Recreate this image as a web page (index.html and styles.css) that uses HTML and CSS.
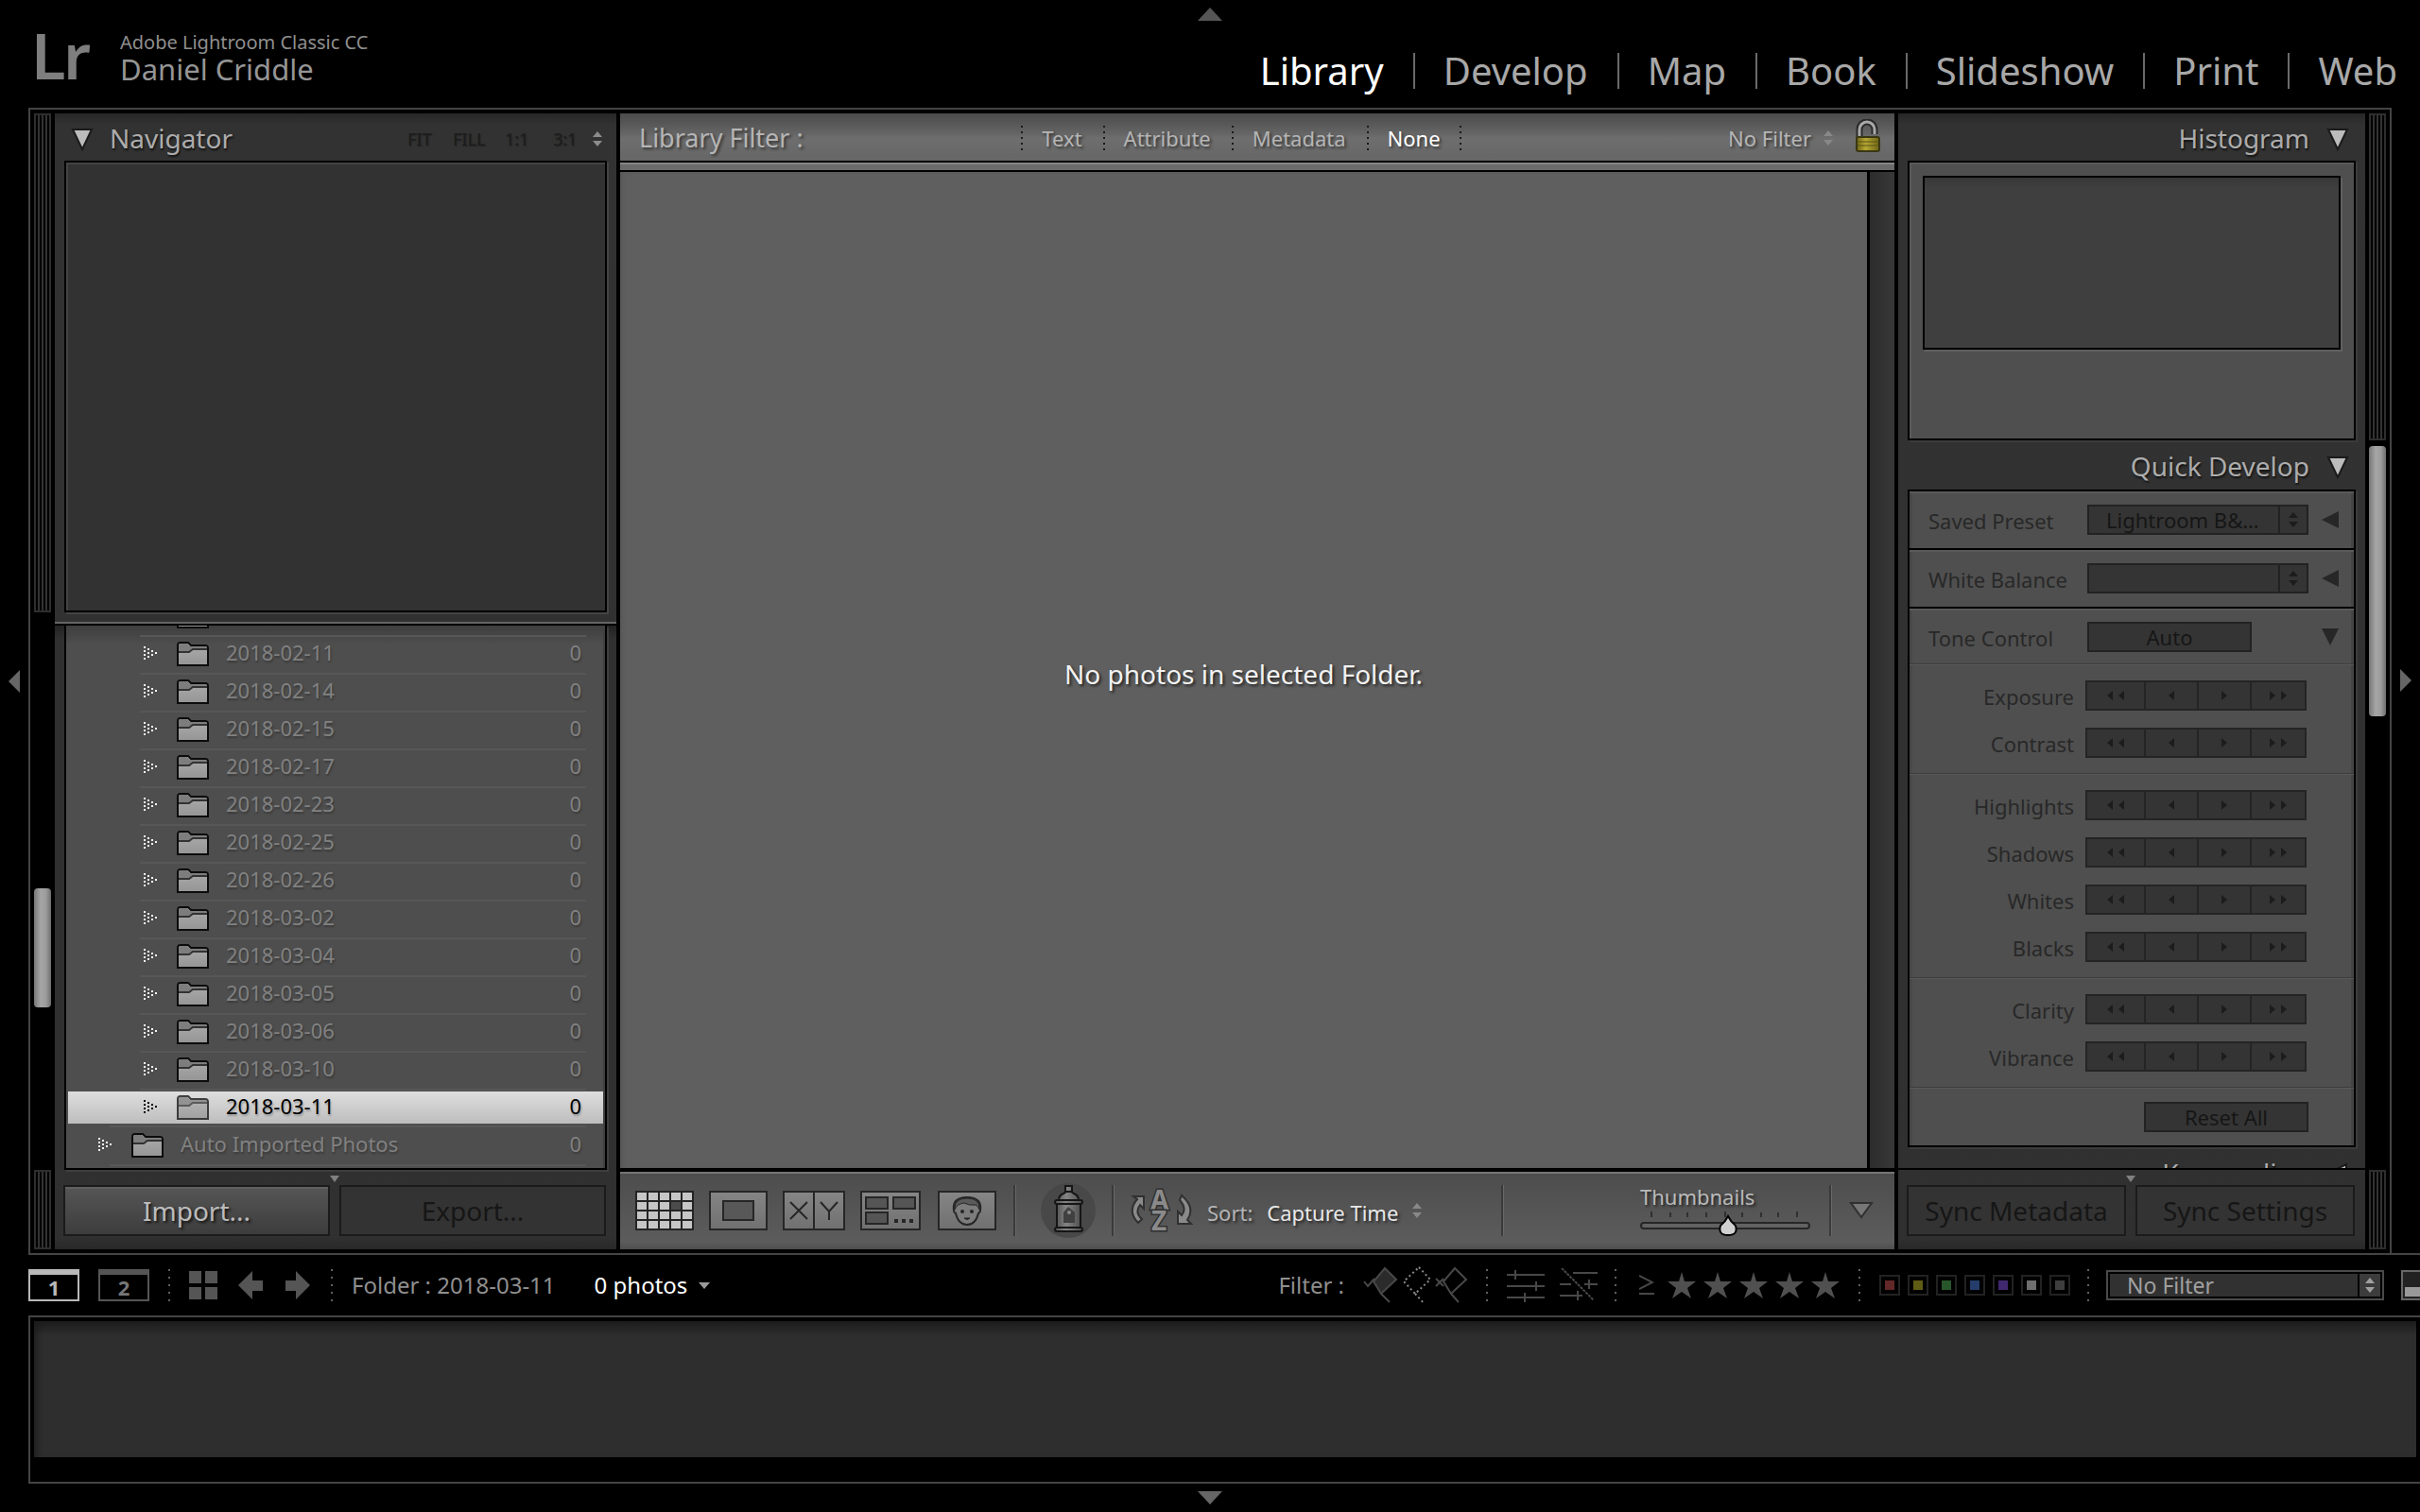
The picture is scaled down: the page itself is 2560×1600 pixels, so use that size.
FILE: index.html
```html
<!DOCTYPE html>
<html lang="en">
<head>
<meta charset="utf-8">
<title>Lightroom Library</title>
<link rel="stylesheet" href="styles.css">
</head>
<body>
<svg class="defs" width="0" height="0" aria-hidden="true">
  <defs>
    <linearGradient id="folderFill" x1="0" y1="0" x2="0" y2="1"><stop offset="0" stop-color="#adadad"/><stop offset="1" stop-color="#959595"/></linearGradient>
    <linearGradient id="iconFill" x1="0" y1="0" x2="0" y2="1"><stop offset="0" stop-color="#868686"/><stop offset="1" stop-color="#707070"/></linearGradient>
    <linearGradient id="brass" x1="0" y1="0" x2="1" y2="0"><stop offset="0" stop-color="#6d6414"/><stop offset=".4" stop-color="#b5a733"/><stop offset="1" stop-color="#6d6414"/></linearGradient>
    <linearGradient id="canFill" x1="0" y1="0" x2="1" y2="0"><stop offset="0" stop-color="#555"/><stop offset=".4" stop-color="#858585"/><stop offset="1" stop-color="#505050"/></linearGradient>
    <symbol id="folder" viewBox="0 0 34 27"><path d="M1 25V4q0-3 3-3h8l3 3h15q3 0 3 3v18z" fill="url(#folderFill)" stroke="#0c0c0c" stroke-width="2"/><path d="M2 10V4q0-2 2-2h7l3 3h16q2 0 2 3H17l-3 3H2z" fill="#7d7d7d"/><path d="M2 11h11l4-3h15" fill="none" stroke="#333" stroke-width="2"/></symbol>
    <symbol id="dots" viewBox="0 0 16 16"><path d="M1 0h2v2H1zM1 4h2v2H1zM1 8h2v2H1zM1 12h2v2H1zM5 2h2v2H5zM5 6h2v2H5zM5 10h2v2H5zM9 4h2v2H9zM9 8h2v2H9zM13 6h2v2h-2z" fill="currentColor"/></symbol>
    <symbol id="updown" viewBox="0 0 12 18"><path d="M6 1l5 6H1zM6 17l5-6H1z" fill="currentColor"/></symbol>
    <symbol id="open" viewBox="0 0 24 26"><path d="M2 3h20L12 24z" fill="#bcbcbc" stroke="#1a1a1a" stroke-width="2"/></symbol>
    <symbol id="star" viewBox="0 0 30 28"><path d="M15 0l3 10h12l-9 7 4 11-10-7-10 7 4-11-9-7h12z" fill="#505050"/></symbol>
    <symbol id="prev2" viewBox="0 0 20 12"><path d="M7 1v10L1 6zM19 1v10l-6-5z" fill="#1c1c1c"/></symbol>
    <symbol id="prev1" viewBox="0 0 20 12"><path d="M13 1v10L7 6z" fill="#1c1c1c"/></symbol>
    <symbol id="next1" viewBox="0 0 20 12"><path d="M7 1v10l6-5z" fill="#1c1c1c"/></symbol>
    <symbol id="next2" viewBox="0 0 20 12"><path d="M1 1v10l6-5zM13 1v10l6-5z" fill="#1c1c1c"/></symbol>
  </defs>
</svg>

<header class="top">
  <div class="top-arrow"><svg width="26" height="14" viewBox="0 0 26 14"><path d="M13 0l13 14H0z" fill="#555"/></svg></div>
  <div class="identity">
    <svg class="logo" width="60" height="54" viewBox="0 0 60 54" role="img" aria-label="Lr"><text y="52" font-size="67"><tspan x="-5">L</tspan><tspan x="29">r</tspan></text></svg>
    <div class="names"><div class="product">Adobe Lightroom Classic CC</div><div class="owner">Daniel Criddle</div></div>
  </div>
  <nav class="modules">
    <a href="#library" class="current">Library</a><a href="#develop">Develop</a><a href="#map">Map</a><a href="#book">Book</a><a href="#slideshow">Slideshow</a><a href="#print">Print</a><a href="#web">Web</a>
  </nav>
</header>

<main class="work">
  <button class="edge" aria-label="Hide left panel"><svg width="12" height="24" viewBox="0 0 12 24"><path d="M12 0v24L0 12z" fill="#666"/></svg></button>
  <div class="work-body">
    <div class="frame">
      <div class="rail">
        <div class="grip grip-nav"></div>
        <div class="track left-track"><div class="thumb"></div></div>
        <div class="grip grip-foot"></div>
      </div>

      <section class="panel">
        <div class="navigator">
          <div class="panel-head">
            <svg width="24" height="26"><use href="#open"/></svg>
            <h2>Navigator</h2>
            <div class="zooms"><span class="z-fit">FIT</span><span class="z-fill">FILL</span><span class="z-one">1:1</span><span class="z-three">3:1</span></div>
            <svg class="ud" width="12" height="18"><use href="#updown"/></svg>
          </div>
          <div class="preview"></div>
        </div>
        <div class="folders-wrap">
          <ul class="folders">
            <li><a class="row" href="#f"><svg class="dots" width="16" height="16"><use href="#dots"/></svg><svg width="34" height="27"><use href="#folder"/></svg></a></li>
            <li><a class="row" href="#f"><svg class="dots" width="16" height="16"><use href="#dots"/></svg><svg width="34" height="27"><use href="#folder"/></svg><span class="name">2018-02-11</span><span>0</span></a></li>
            <li><a class="row" href="#f"><svg class="dots" width="16" height="16"><use href="#dots"/></svg><svg width="34" height="27"><use href="#folder"/></svg><span class="name">2018-02-14</span><span>0</span></a></li>
            <li><a class="row" href="#f"><svg class="dots" width="16" height="16"><use href="#dots"/></svg><svg width="34" height="27"><use href="#folder"/></svg><span class="name">2018-02-15</span><span>0</span></a></li>
            <li><a class="row" href="#f"><svg class="dots" width="16" height="16"><use href="#dots"/></svg><svg width="34" height="27"><use href="#folder"/></svg><span class="name">2018-02-17</span><span>0</span></a></li>
            <li><a class="row" href="#f"><svg class="dots" width="16" height="16"><use href="#dots"/></svg><svg width="34" height="27"><use href="#folder"/></svg><span class="name">2018-02-23</span><span>0</span></a></li>
            <li><a class="row" href="#f"><svg class="dots" width="16" height="16"><use href="#dots"/></svg><svg width="34" height="27"><use href="#folder"/></svg><span class="name">2018-02-25</span><span>0</span></a></li>
            <li><a class="row" href="#f"><svg class="dots" width="16" height="16"><use href="#dots"/></svg><svg width="34" height="27"><use href="#folder"/></svg><span class="name">2018-02-26</span><span>0</span></a></li>
            <li><a class="row" href="#f"><svg class="dots" width="16" height="16"><use href="#dots"/></svg><svg width="34" height="27"><use href="#folder"/></svg><span class="name">2018-03-02</span><span>0</span></a></li>
            <li><a class="row" href="#f"><svg class="dots" width="16" height="16"><use href="#dots"/></svg><svg width="34" height="27"><use href="#folder"/></svg><span class="name">2018-03-04</span><span>0</span></a></li>
            <li><a class="row" href="#f"><svg class="dots" width="16" height="16"><use href="#dots"/></svg><svg width="34" height="27"><use href="#folder"/></svg><span class="name">2018-03-05</span><span>0</span></a></li>
            <li><a class="row" href="#f"><svg class="dots" width="16" height="16"><use href="#dots"/></svg><svg width="34" height="27"><use href="#folder"/></svg><span class="name">2018-03-06</span><span>0</span></a></li>
            <li><a class="row" href="#f"><svg class="dots" width="16" height="16"><use href="#dots"/></svg><svg width="34" height="27"><use href="#folder"/></svg><span class="name">2018-03-10</span><span>0</span></a></li>
            <li class="wide-rule"><a class="row selected" href="#f"><svg class="dots" width="16" height="16"><use href="#dots"/></svg><svg class="faded" width="34" height="27"><use href="#folder"/></svg><span class="name">2018-03-11</span><span>0</span></a></li>
            <li class="wide-rule"><a class="row parent" href="#f"><svg class="dots" width="16" height="16"><use href="#dots"/></svg><svg width="34" height="27"><use href="#folder"/></svg><span class="name">Auto Imported Photos</span><span>0</span></a></li>
          </ul>
        </div>
        <div class="panel-foot">
          <svg class="nub" width="10" height="7" viewBox="0 0 10 7"><path d="M0 0h10L5 7z" fill="#808080"/></svg>
          <div class="pair"><button class="big on">Import...</button><button class="big" disabled>Export...</button></div>
        </div>
      </section>

      <section class="center">
        <div class="filterbar">
          <span class="fb-title">Library Filter :</span>
          <div class="fb-tabs"><button>Text</button><button>Attribute</button><button>Metadata</button><button class="current">None</button></div>
          <div class="fb-right"><span>No Filter</span><svg class="dim" width="12" height="18"><use href="#updown"/></svg>
            <svg class="lock" width="28" height="36" viewBox="0 0 28 36"><path d="M5 20V11a8 8 0 0 1 16 0v5" fill="none" stroke="#2b2b2b" stroke-width="7"/><path d="M5 20V11a8 8 0 0 1 16 0v5" fill="none" stroke="#a9a9a9" stroke-width="3"/><rect x="2" y="19" width="24" height="15" rx="2" fill="url(#brass)" stroke="#3a3714" stroke-width="2"/><path d="M3 24h22M3 28h22" stroke="#5d5512"/></svg></div>
        </div>
        <div class="band"></div>
        <div class="stage"><div class="canvas"><p>No photos in selected Folder.</p></div><div class="gutter"></div></div>
        <div class="toolbar">
          <div class="views">
            <button aria-label="Grid view"><svg width="62" height="42" viewBox="0 0 62 42"><rect width="62" height="42" fill="#242424"/><path d="M2 2h10v8H2zM14 2h10v8H14zM26 2h10v8H26zM38 2h10v8H38zM50 2h10v8H50zM2 12h10v8H2zM14 12h10v8H14zM26 12h10v8H26zM50 12h10v8H50zM2 22h10v8H2zM14 22h10v8H14zM26 22h10v8H26zM38 22h10v8H38zM50 22h10v8H50zM2 32h10v8H2zM14 32h10v8H14zM26 32h10v8H26zM38 32h10v8H38zM50 32h10v8H50z" fill="#c6c6c6"/><path d="M38 12h10v8H38z" fill="#4c4c4c"/></svg></button>
            <button aria-label="Loupe view"><svg width="62" height="42" viewBox="0 0 62 42"><rect x="1" y="1" width="60" height="40" fill="url(#iconFill)" stroke="#262626" stroke-width="2"/><rect x="15" y="11" width="32" height="20" fill="#585858" stroke="#262626" stroke-width="2"/></svg></button>
            <button aria-label="Compare view"><svg width="66" height="42" viewBox="0 0 66 42"><rect x="1" y="1" width="64" height="40" fill="url(#iconFill)" stroke="#262626" stroke-width="2"/><path d="M33 1v40M8 12l18 18M26 12L8 30M40 12l9 10 9-10M49 22v9" fill="none" stroke="#262626" stroke-width="2"/></svg></button>
            <button aria-label="Survey view"><svg width="64" height="42" viewBox="0 0 64 42"><rect x="1" y="1" width="62" height="40" fill="url(#iconFill)" stroke="#262626" stroke-width="2"/><path d="M6 7h23v12H6zM35 7h23v12H35zM6 23h23v12H6z" fill="#555" stroke="#262626" stroke-width="2"/><path d="M36 30h4v4h-4zM44 30h4v4h-4zM52 30h4v4h-4z" fill="#262626"/></svg></button>
            <button aria-label="People view"><svg width="62" height="42" viewBox="0 0 62 42"><rect x="1" y="1" width="60" height="40" fill="url(#iconFill)" stroke="#262626" stroke-width="2"/><path d="M17 21q-2-14 14-14t14 14q0 2-2 3-3 12-12 12T19 24q-2-1-2-3z" fill="#7c7c7c" stroke="#262626" stroke-width="2"/><path d="M18 20q-1-12 13-12t13 12q-1-4-4-5-7 1-12-2-8 1-10 7z" fill="#5a5a5a" stroke="#262626"/><circle cx="26" cy="22" r="2" fill="#262626"/><circle cx="36" cy="22" r="2" fill="#262626"/><path d="M28 29h6q-3 3-6 0z" fill="#262626" stroke="#262626"/></svg></button>
          </div>
          <i class="rule"></i>
          <button class="spray" aria-label="Painter"><svg width="58" height="58" viewBox="0 0 58 58"><circle cx="29" cy="29" r="29" fill="#484848"/><g fill="url(#canFill)" stroke="#161616" stroke-width="2"><path d="M26 3h7v6h-7zM19 18q0-5 5-7l3-2h5l3 2q5 2 5 7zM17 22h25v27H17z"/><rect x="15" y="18" width="29" height="4" rx="2"/><rect x="15" y="47" width="29" height="4" rx="2"/></g><path d="M24 42V31l5-6 7 6v11z" fill="#404040"/><circle cx="30" cy="31" r="2" fill="#888"/></svg></button>
          <i class="rule"></i>
          <button class="az" aria-label="Sort direction"><svg width="66" height="50" viewBox="0 0 66 50"><g fill="#8a8a8a" stroke="#303030" stroke-width="2"><path d="M8 38q-12-12-1-25l-4-3h11v13l-4-4q-6 8 2 15zM54 9q15 13 6 26l4 4H50V26l4 4q6-7-2-16z"/></g><text x="21" y="24" class="az-t">A</text><text x="22" y="46" class="az-t">Z</text></svg></button>
          <span class="sort">Sort:</span><span class="sort-by">Capture Time</span><svg class="sort-ud" width="12" height="18"><use href="#updown"/></svg>
          <i class="rule sort-end"></i>
          <div class="thumbs">
            <label for="size">Thumbnails</label>
            <svg width="180" height="6" viewBox="0 0 180 6"><path d="M12 0v6M32 1v5M50 1v5M70 1v5M90 0v6M108 1v5M128 1v5M146 1v5M166 0v6" stroke="#303030" stroke-width="2"/></svg>
            <input id="size" type="range" min="0" max="100" value="52">
          </div>
          <i class="rule"></i>
          <button class="more" aria-label="Toolbar options"><svg width="26" height="18" viewBox="0 0 26 18"><path d="M2 1h22L13 16z" fill="#777" stroke="#303030" stroke-width="2"/></svg></button>
        </div>
      </section>

      <section class="panel">
        <div class="scroll">
          <div class="panel-head end"><h2>Histogram</h2><svg width="24" height="26"><use href="#open"/></svg></div>
          <div class="box histo"><div class="graph"></div></div>
          <div class="panel-head end tall"><h2>Quick Develop</h2><svg width="24" height="26"><use href="#open"/></svg></div>
          <div class="box quick">
            <div class="q-row"><label for="preset">Saved Preset</label><div class="drop"><select id="preset" disabled><option>Lightroom B&amp;…</option></select><svg width="12" height="18"><use href="#updown"/></svg></div><svg class="tri" width="18" height="18" viewBox="0 0 18 18"><path d="M18 0v18L0 9z" fill="#272727"/></svg></div>
            <div class="q-row"><label for="wb">White Balance</label><div class="drop"><select id="wb" disabled><option> </option></select><svg width="12" height="18"><use href="#updown"/></svg></div><svg class="tri" width="18" height="18" viewBox="0 0 18 18"><path d="M18 0v18L0 9z" fill="#272727"/></svg></div>
            <div class="q-row tone"><span>Tone Control</span><button class="small" disabled>Auto</button><svg class="tri" width="18" height="18" viewBox="0 0 18 18"><path d="M0 0h18L9 18z" fill="#272727"/></svg></div>
            <div class="q-group">
              <div class="step"><span>Exposure</span><button disabled aria-label="Much less"><svg width="20" height="12"><use href="#prev2"/></svg></button><button disabled aria-label="Less"><svg width="20" height="12"><use href="#prev1"/></svg></button><button disabled aria-label="More"><svg width="20" height="12"><use href="#next1"/></svg></button><button disabled aria-label="Much more"><svg width="20" height="12"><use href="#next2"/></svg></button></div>
              <div class="step"><span>Contrast</span><button disabled aria-label="Much less"><svg width="20" height="12"><use href="#prev2"/></svg></button><button disabled aria-label="Less"><svg width="20" height="12"><use href="#prev1"/></svg></button><button disabled aria-label="More"><svg width="20" height="12"><use href="#next1"/></svg></button><button disabled aria-label="Much more"><svg width="20" height="12"><use href="#next2"/></svg></button></div>
            </div>
            <div class="q-group">
              <div class="step"><span>Highlights</span><button disabled aria-label="Much less"><svg width="20" height="12"><use href="#prev2"/></svg></button><button disabled aria-label="Less"><svg width="20" height="12"><use href="#prev1"/></svg></button><button disabled aria-label="More"><svg width="20" height="12"><use href="#next1"/></svg></button><button disabled aria-label="Much more"><svg width="20" height="12"><use href="#next2"/></svg></button></div>
              <div class="step"><span>Shadows</span><button disabled aria-label="Much less"><svg width="20" height="12"><use href="#prev2"/></svg></button><button disabled aria-label="Less"><svg width="20" height="12"><use href="#prev1"/></svg></button><button disabled aria-label="More"><svg width="20" height="12"><use href="#next1"/></svg></button><button disabled aria-label="Much more"><svg width="20" height="12"><use href="#next2"/></svg></button></div>
              <div class="step"><span>Whites</span><button disabled aria-label="Much less"><svg width="20" height="12"><use href="#prev2"/></svg></button><button disabled aria-label="Less"><svg width="20" height="12"><use href="#prev1"/></svg></button><button disabled aria-label="More"><svg width="20" height="12"><use href="#next1"/></svg></button><button disabled aria-label="Much more"><svg width="20" height="12"><use href="#next2"/></svg></button></div>
              <div class="step"><span>Blacks</span><button disabled aria-label="Much less"><svg width="20" height="12"><use href="#prev2"/></svg></button><button disabled aria-label="Less"><svg width="20" height="12"><use href="#prev1"/></svg></button><button disabled aria-label="More"><svg width="20" height="12"><use href="#next1"/></svg></button><button disabled aria-label="Much more"><svg width="20" height="12"><use href="#next2"/></svg></button></div>
            </div>
            <div class="q-group">
              <div class="step"><span>Clarity</span><button disabled aria-label="Much less"><svg width="20" height="12"><use href="#prev2"/></svg></button><button disabled aria-label="Less"><svg width="20" height="12"><use href="#prev1"/></svg></button><button disabled aria-label="More"><svg width="20" height="12"><use href="#next1"/></svg></button><button disabled aria-label="Much more"><svg width="20" height="12"><use href="#next2"/></svg></button></div>
              <div class="step"><span>Vibrance</span><button disabled aria-label="Much less"><svg width="20" height="12"><use href="#prev2"/></svg></button><button disabled aria-label="Less"><svg width="20" height="12"><use href="#prev1"/></svg></button><button disabled aria-label="More"><svg width="20" height="12"><use href="#next1"/></svg></button><button disabled aria-label="Much more"><svg width="20" height="12"><use href="#next2"/></svg></button></div>
            </div>
            <div class="q-group reset"><button class="small" disabled>Reset All</button></div>
          </div>
          <div class="panel-head end tall"><h2>Keywording</h2><svg width="24" height="26" viewBox="0 0 24 26"><path d="M21 3v20L2 13z" fill="#bcbcbc" stroke="#1a1a1a" stroke-width="2"/></svg></div>
        </div>
        <div class="panel-foot">
          <svg class="nub" width="10" height="7" viewBox="0 0 10 7"><path d="M0 0h10L5 7z" fill="#808080"/></svg>
          <div class="pair"><button class="big" disabled>Sync Metadata</button><button class="big" disabled>Sync Settings</button></div>
        </div>
      </section>

      <div class="rail">
        <div class="grip grip-histo"></div>
        <div class="track right-track"><div class="thumb"></div></div>
        <div class="grip grip-foot"></div>
      </div>
    </div>
    <button class="edge" aria-label="Hide right panel"><svg width="12" height="24" viewBox="0 0 12 24"><path d="M0 0v24l12-12z" fill="#666"/></svg></button>
  </div>
</main>

<div class="status">
  <div class="st-left">
    <button class="screen main-screen">1</button>
    <button class="screen">2</button>
    <i class="dotrule"></i>
    <button aria-label="Grid"><svg width="30" height="30" viewBox="0 0 30 30"><path d="M0 0h13v13H0zM17 0h13v13H17zM0 17h13v13H0zM17 17h13v13H17z" fill="#555"/></svg></button>
    <button class="go-back" aria-label="Back"><svg width="26" height="30" viewBox="0 0 26 30"><path d="M15 0v10h11v11H15v9L0 15z" fill="#555"/></svg></button>
    <button class="go-next" aria-label="Forward"><svg width="26" height="30" viewBox="0 0 26 30"><path d="M11 0v10H0v11h11v9l15-15z" fill="#555"/></svg></button>
    <i class="dotrule"></i>
    <span class="source">Folder : 2018-03-11</span>
    <span class="count">0 photos</span>
    <svg class="count-tri" width="12" height="7" viewBox="0 0 12 7"><path d="M0 0h12L6 7z" fill="#999"/></svg>
  </div>
  <div class="st-right">
    <span class="f-label">Filter :</span>
    <div class="flags">
      <button aria-label="Flagged"><svg width="38" height="42" viewBox="0 0 38 42"><path d="M23 3l12 12-16 15-8-13z" fill="#2b2b2b" stroke="#484848" stroke-width="2"/><path d="M19 30l9 9M1 17l4 5 7-8" fill="none" stroke="#484848" stroke-width="2"/></svg></button>
      <button aria-label="Unflagged"><svg width="38" height="42" viewBox="0 0 38 42"><path d="M21 2l12 13-16 15L5 17zM17 30l10 11" fill="none" stroke="#8a8a8a" stroke-width="2" stroke-dasharray="2 3"/></svg></button>
      <button aria-label="Rejected"><svg width="38" height="42" viewBox="0 0 38 42"><path d="M21 3l12 12-16 15-8-13zM17 30l8 9M1 14l8 8M9 14l-8 8" fill="none" stroke="#484848" stroke-width="2"/></svg></button>
    </div>
    <i class="dotrule"></i>
    <div class="edits">
      <button aria-label="Edited"><svg width="42" height="36" viewBox="0 0 42 36"><path d="M1 7h40M1 19h40M1 31h40M10 2v10M32 14v10M20 26v10" stroke="#484848" stroke-width="2"/></svg></button>
      <button aria-label="Unedited"><svg width="42" height="36" viewBox="0 0 42 36"><path d="M15 5h26M1 17h12M27 17h14M1 29h24M32 12v10M20 24v10" stroke="#484848" stroke-width="2"/><path d="M3 0l34 34" stroke="#484848" stroke-width="2" stroke-dasharray="3 1"/></svg></button>
    </div>
    <i class="dotrule"></i>
    <div class="stars">
      <button class="gte" aria-label="At least"><svg width="16" height="22" viewBox="0 0 16 22"><path d="M0 1l14 7L0 15M0 20h16" fill="none" stroke="#484848" stroke-width="2"/></svg></button>
      <button aria-label="1 star"><svg width="30" height="28"><use href="#star"/></svg></button><button aria-label="2 stars"><svg width="30" height="28"><use href="#star"/></svg></button><button aria-label="3 stars"><svg width="30" height="28"><use href="#star"/></svg></button><button aria-label="4 stars"><svg width="30" height="28"><use href="#star"/></svg></button><button aria-label="5 stars"><svg width="30" height="28"><use href="#star"/></svg></button>
    </div>
    <i class="dotrule"></i>
    <div class="swatches"><button class="red" aria-label="Red"></button><button class="yellow" aria-label="Yellow"></button><button class="green" aria-label="Green"></button><button class="blue" aria-label="Blue"></button><button class="purple" aria-label="Purple"></button><button class="white" aria-label="Custom"></button><button class="none" aria-label="No label"></button></div>
    <i class="dotrule"></i>
    <div class="f-drop"><select aria-label="Filter preset"><option>No Filter</option></select><svg width="12" height="18"><use href="#updown"/></svg></div>
    <button class="switch" aria-label="Filters on or off"><span></span></button>
  </div>
</div>

<section class="film"><div class="strip"></div></section>
<footer class="bottom"><svg width="26" height="14" viewBox="0 0 26 14"><path d="M0 0h26L13 14z" fill="#666"/></svg></footer>
</body>
</html>
```
FILE: styles.css
```css
* { box-sizing: border-box; }
body {
  margin: 0; height: 100vh; min-height: 1400px; overflow: hidden;
  display: flex; flex-direction: column;
  background: #000; color: #a8a8a8;
  font: 22px/30px "Noto Sans", sans-serif;
}
button, select, input { font: inherit; color: inherit; margin: 0; padding: 0; border: 0; background: none; border-radius: 0; }
button { display: flex; align-items: center; justify-content: center; }
select { appearance: none; opacity: 1; }
a { color: inherit; text-decoration: none; }
h2, p, ul { margin: 0; padding: 0; font-weight: 400; list-style: none; }
svg { display: block; flex: none; }
.defs { position: absolute; }

/* header */
.top { flex: none; height: 114px; display: grid; grid-template: 32px 1fr / auto 1fr; }
.top-arrow { grid-column: 1 / -1; display: flex; justify-content: center; padding-top: 8px; }
.identity { display: flex; padding-left: 38px; gap: 29px; }
.logo { overflow: visible; }
.logo text { fill: #7e7e7e; font-weight: 600; }
.names { display: flex; flex-direction: column; }
.product { font-size: 20px; line-height: 26px; color: #8f8f8f; }
.owner { font-size: 31px; line-height: 30px; color: #959595; }
.modules { display: flex; justify-content: flex-end; align-items: flex-start; padding: 24px 24px 0 0; font-size: 40px; line-height: 38px; }
.modules a { padding-right: 31px; }
.modules a + a { padding-left: 30px; border-left: 2px solid #6a6a6a; }
.modules a:last-child { padding-right: 0; }
.modules .current { color: #fff; }

/* workspace */
.work { flex: 1; min-height: 0; display: flex; }
.edge { flex: none; width: 30px; }
.work-body { flex: 1; min-width: 0; display: flex; border-bottom: 2px solid #444; }
.frame {
  flex: 1; min-width: 0; display: grid; gap: 4px;
  grid-template: minmax(0, 1fr) / 18px 594px minmax(0, 1fr) 494px 18px;
  padding: 4px; border: solid #444; border-width: 2px 2px 0 2px;
}
.rail { display: flex; flex-direction: column; }
.grip { flex: none; border: 2px solid #2e2e2e; background: repeating-linear-gradient(90deg, #000 0 2px, #333 2px 4px); }
.grip-nav { height: 528px; }
.grip-histo { height: 346px; }
.grip-foot { height: 84px; }
.track { flex: 1; min-height: 0; display: flex; flex-direction: column; }
.track::before, .track::after { content: ""; }
.thumb { border-radius: 4px; background: linear-gradient(90deg, #777, #a6a6a6 40%, #9c9c9c 70%, #6e6e6e); }
.left-track::before { flex: 292; }
.left-track .thumb { flex: 126; }
.left-track::after { flex: 172; }
.right-track::before { flex: 6; }
.right-track .thumb { flex: 286; }
.right-track::after { flex: 480; }

.panel { display: flex; flex-direction: column; min-height: 0; background: linear-gradient(#262626, #323232 12px, #303030 calc(100% - 12px), #282828); }
.panel-head { flex: none; height: 50px; display: flex; align-items: center; padding: 4px 14px 0 17px; }
.panel-head h2 { font-size: 28px; line-height: 36px; color: #acacac; text-shadow: 1px 2px 2px #111; padding: 0 0 3px 17px; }
.panel-head.end { justify-content: flex-end; padding: 4px 17px 0; }
.panel-head.end h2 { padding: 0 18px 3px 0; }
.panel-head.tall { height: 52px; }
.navigator { flex: none; padding-bottom: 10px; border-bottom: 2px solid #666; }
.preview { height: 478px; margin: 0 10px; border: 2px solid #000; background: #323232; box-shadow: inset 2px 2px 0 #444, 2px 2px 0 #444; }
.zooms { margin-left: auto; display: flex; font-size: 18px; color: #1c1c1c; text-shadow: 1px 1px 1px #222; }
.z-fit { width: 48px; }
.z-fill { width: 55px; }
.z-one { width: 51px; }
.z-three { width: 41px; }
.ud { color: #8c8c8c; }

.folders-wrap { flex: 1; min-height: 0; display: flex; padding: 0 10px; border-top: 2px solid #000; background: linear-gradient(#222, #303030 14px); }
.folders {
  flex: 1; display: flex; flex-direction: column; justify-content: flex-end; overflow: hidden;
  padding: 0 2px 2px; border: solid #000; border-width: 0 2px 2px;
  background: linear-gradient(#3e3e3e, #4e4e4e 20px);
  box-shadow: 2px 2px 0 #3e3e3e, inset -2px 0 0 #404040;
}
.folders li { flex: none; height: 40px; }
.folders li::after { content: ""; display: block; height: 2px; margin: 2px 18px 0 76px; background: #575757; }
.folders .wide-rule::after { margin-left: 44px; }
.row { display: flex; align-items: center; height: 36px; padding: 0 23px 0 79px; color: #818181; text-shadow: 1px 2px 2px #3a3a3a; }
.row.parent { padding-left: 31px; }
.row .dots { color: #f4f4f4; margin-right: 20px; }
.row span { padding-bottom: 4px; }
.row .name { flex: 1; padding-left: 18px; }
.row.selected { height: 34px; margin: 1px 0; color: #000; background: linear-gradient(#dedede, #bdbdbd); text-shadow: 1px 2px 2px #999; }
.row.selected .dots { color: #000; }
.faded { opacity: .75; }

.panel-foot { flex: none; height: 84px; display: flex; flex-direction: column; align-items: center; padding: 6px 11px 14px 9px; gap: 3px; }
.pair { width: 100%; flex: 1; display: flex; gap: 10px; }
.big { flex: 1; height: 54px; border: 2px solid #1b1b1b; background: #333; font-size: 28px; line-height: 36px; color: #161616; }
.big.on { background: linear-gradient(#565656, #3d3d3d); color: #bcbcbc; text-shadow: 2px 2px 3px #111; box-shadow: inset 0 2px 0 #606060; }

/* centre */
.center { display: flex; flex-direction: column; min-height: 0; }
.filterbar {
  flex: none; height: 50px; display: grid; grid-template-columns: 1fr auto 1fr; align-items: center;
  padding: 2px 14px 0 20px; background: linear-gradient(#4a4a4a, #666 22px, #6e6e6e 26px, #666);
  color: #b5b5b5; text-shadow: 2px 2px 3px #333;
}
.fb-title { font-size: 27px; }
.fb-tabs { display: flex; padding-right: 40px; --dash: repeating-linear-gradient(#1a1a1a 0 2px, transparent 2px 6px); }
.fb-tabs button { height: 26px; padding: 0 22px; background: var(--dash) left / 2px 100% no-repeat; text-shadow: inherit; }
.fb-tabs button:last-child { background: var(--dash) left / 2px 100% no-repeat, var(--dash) right / 2px 100% no-repeat; }
.fb-tabs .current { color: #fff; }
.fb-right { display: flex; justify-content: flex-end; align-items: center; gap: 12px; }
.dim { color: #888; }
.lock { margin: 0 0 4px 10px; }
.band { flex: none; height: 12px; border: solid #000; border-width: 2px 0; background: linear-gradient(#868686 2px, #6b6b6b 2px); }
.stage { flex: 1; min-height: 0; display: flex; }
.canvas { flex: 1; display: flex; align-items: center; justify-content: center; background: #5f5f5f; box-shadow: inset 4px 0 4px -2px #555; }
.canvas p { font-size: 28px; line-height: 36px; padding-top: 8px; color: #f2f2f2; text-shadow: 2px 2px 3px #222; }
.gutter { width: 29px; border-left: 3px solid #000; background: linear-gradient(90deg, #2c2c2c, #383838); }
.toolbar {
  flex: none; height: 86px; border-top: 4px solid #000; display: flex; align-items: center; padding: 0 22px 0 16px;
  background: linear-gradient(#757575 2px, #4d4d4d 2px, #5c5c5c calc(100% - 8px), #4e4e4e);
}
.views { display: flex; gap: 16px; }
.views button:last-child { margin-left: 2px; }
.rule { flex: none; width: 3px; height: 54px; background: linear-gradient(90deg, #3a3a3a 2px, #686868 2px); }
.views + .rule { margin-left: 18px; }
.spray { margin: 0 17px 0 26px; }
.az { margin-left: 17px; }
.az-t { font-size: 28px; font-weight: 700; fill: #8a8a8a; stroke: #303030; stroke-width: 3px; paint-order: stroke; }
.sort { margin: 4px 15px 0; color: #b4b4b4; text-shadow: 2px 2px 3px #222; }
.sort-by { margin-top: 4px; color: #e8e8e8; text-shadow: 2px 2px 3px #222; }
.sort-ud { color: #888; margin-left: 14px; }
.sort-end { margin-left: 83px; margin-right: auto; }
.thumbs { width: 180px; margin-right: 20px; display: flex; flex-direction: column; padding-bottom: 6px; }
.thumbs label { line-height: 32px; color: #b9b9b9; text-shadow: 2px 2px 3px #222; }
.thumbs input { appearance: none; height: 18px; width: 100%; }
.thumbs input::-webkit-slider-runnable-track { height: 8px; border: 2px solid #262626; border-radius: 4px; background: #626262; }
.thumbs input::-webkit-slider-thumb {
  appearance: none; width: 22px; height: 24px; margin-top: -10px;
  background: url("data:image/svg+xml,%3Csvg xmlns='http://www.w3.org/2000/svg' viewBox='0 0 22 24'%3E%3Cpath d='M11 2Q14 8 19 12Q22 22 11 22Q0 22 3 12Q8 8 11 2Z' fill='%23d0d0d0' stroke='%23000' stroke-width='2'/%3E%3C/svg%3E") no-repeat;
}
.more { margin-left: 18px; }

/* right panel */
.scroll { flex: 1; min-height: 0; overflow: hidden; border-bottom: 2px solid #000; }
.box { margin: 0 10px; border: 2px solid #000; background: #4f4f4f; box-shadow: 2px 2px 0 #3c3c3c, inset 2px 2px 0 #5a5a5a; }
.histo { height: 296px; padding: 14px; }
.graph { height: 184px; border: 2px solid #000; background: linear-gradient(#383838, #3f3f3f 12px); box-shadow: 2px 2px 0 #606060; }
.quick { color: #282828; box-shadow: 2px 2px 0 #3c3c3c, inset 0 2px 0 #5a5a5a, inset -3px 0 0 #454545, inset 3px 0 0 #484848; }
.q-row { display: grid; grid-template-columns: 168px 234px 1fr; align-items: center; height: 62px; padding: 0 16px 0 20px; border-bottom: 2px solid #000; box-shadow: inset 0 2px 0 #5a5a5a; }
.q-row label, .q-row > span { padding-top: 2px; }
.q-row.tone { height: 58px; border: 0; padding-top: 2px; }
.tri { justify-self: end; }
.drop { height: 32px; display: flex; align-items: center; border: 2px solid #222; background: #343434; }
.drop select { flex: 1; min-width: 0; height: 28px; line-height: 28px; padding-left: 18px; color: #161616; border-right: 2px solid #222; }
.drop svg { width: 28px; color: #1c1c1c; }
.small { width: 174px; height: 32px; border: 2px solid #222; background: #343434; color: #161616; }
.q-group { display: flex; flex-direction: column; gap: 18px; padding: 16px 50px 16px 20px; margin-top: 2px; box-shadow: 0 -1px 0 #5a5a5a, 0 -2px 0 #3c3c3c; }
.step { display: grid; grid-template: 32px / 166px 62px 56px 56px 60px; }
.step span { text-align: right; line-height: 34px; padding-right: 12px; }
.step button { border: 2px solid #242424; border-right-width: 0; background: #343434; }
.step button:last-child { border-right-width: 2px; }
.reset { padding: 14px 48px 14px 0; align-items: flex-end; }

/* status row */
.status { flex: none; height: 64px; display: flex; justify-content: space-between; align-items: center; padding-left: 30px; }
.st-left, .st-right, .flags, .edits, .stars, .swatches { display: flex; align-items: center; }
.screen { width: 54px; height: 34px; border: 2px solid #555; border-top-width: 6px; font-weight: 700; line-height: 22px; color: #777; margin-right: 20px; }
.screen.main-screen { border-color: #b8b8b8; color: #b8b8b8; }
.dotrule { flex: none; width: 2px; height: 34px; background: repeating-linear-gradient(#606060 0 2px, transparent 2px 8px); }
.st-left .dotrule + button { margin-left: 20px; }
.go-back { margin-left: 22px; }
.go-next { margin: 0 22px 0 24px; }
.source { margin-left: 20px; font-size: 24px; color: #8f8f8f; }
.count { margin-left: 41px; font-size: 24px; color: #fff; }
.count-tri { margin-left: 12px; }
.f-label { margin-right: 20px; font-size: 24px; color: #8f8f8f; }
.flags { margin-right: 16px; }
.edits { gap: 14px; margin: 0 17px 0 19px; }
.stars { gap: 8px; margin: 0 20px 0 24px; }
.gte { margin-right: 6px; }
.swatches { gap: 8px; margin: 0 18px 0 20px; }
.swatches button { width: 22px; height: 22px; border: 2px solid #222; background: #000; padding: 4px; background-clip: content-box; }
.swatches .red { background-color: #632828; }
.swatches .yellow { background-color: #5f5c14; }
.swatches .green { background-color: #28562b; }
.swatches .blue { background-color: #243d6b; }
.swatches .purple { background-color: #40286e; }
.swatches .white { background-color: #6e6e6e; }
.swatches .none { background-color: #3e3e3e; }
.f-drop { width: 294px; height: 32px; margin: 0 18px; display: flex; align-items: center; border: 2px solid #4a4a4a; padding: 2px; background: #000; }
.f-drop select { flex: 1; height: 24px; line-height: 24px; padding-left: 18px; font-size: 23px; background: #313131; color: #a0a0a0; }
.f-drop svg { width: 22px; margin-left: 2px; height: 24px; padding: 3px 0; background: #3c3c3c; color: #a0a0a0; }
.switch { width: 20px; height: 32px; border: 2px solid #666; border-right: 0; padding: 2px 0 2px 2px; align-items: flex-end; background: #222; }
.switch span { width: 100%; height: 10px; background: #999; }

/* filmstrip */
.film { flex: none; height: 178px; margin-left: 30px; border: solid #444; border-width: 2px 0 2px 2px; padding: 4px 4px 26px; }
.strip { height: 144px; background: linear-gradient(#1c1c1c, #2e2e2e 16px); box-shadow: inset 8px 0 8px -6px #1a1a1a; }
.bottom { flex: none; height: 30px; display: flex; justify-content: center; padding-top: 8px; }
```
